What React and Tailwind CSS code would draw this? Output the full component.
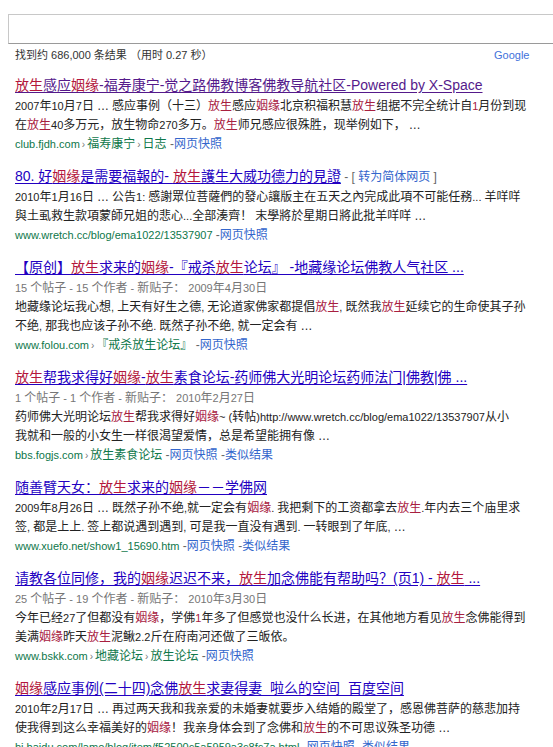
const RED = 'text-[#b3163c]';

// Latin runs sit a little smaller than the CJK text, as in the source page
function Mixed({ text, small = true }) {
  if (!small) return text;
  const runs = text.split(/([\x20-\x7e]+)/);
  return runs.map((t, i) =>
    /^[\x20-\x7e]+$/.test(t) ? (
      <span key={i} className="text-[11px]">{t}</span>
    ) : (
      <span key={i}>{t}</span>
    )
  );
}

// "{...}" marks the highlighted keyword parts
function Marked({ text, red = RED, small = false }) {
  const parts = text.split(/(\{[^}]*\})/);
  return parts.map((p, i) =>
    p.startsWith('{') ? (
      <span key={i} className={red}>
        <Mixed text={p.slice(1, -1)} small={small} />
      </span>
    ) : (
      <span key={i}>
        <Mixed text={p} small={small} />
      </span>
    )
  );
}

const results = [
  {
    title: '{放生}感应{姻缘}-福寿康宁-觉之路佛教博客佛教导航社区-Powered by X-Space',
    visited: true,
    lines: [
      '2007年10月7日 … 感应事例（十三）{放生}感应{姻缘}北京积福积慧{放生}组据不完全统计自{1}月份到现',
      '在{放生}40多万元，放生物命270多万。{放生}师兄感应很殊胜，现举例如下， …',
    ],
    url: 'club.fjdh.com',
    crumbs: ['福寿康宁', '日志'],
    links: ['网页快照'],
  },
  {
    title: '80. 好{姻缘}是需要福報的- {放生}護生大威功德力的見證',
    convert: true,
    lines: [
      '2010年1月16日 … 公告1: 感謝眾位菩薩們的發心讓版主在五天之內完成此項不可能任務... 羊咩咩',
      '與土虱救生款項蒙師兄姐的悲心...全部湊齊！ 末學將於星期日將此批羊咩咩 …',
    ],
    url: 'www.wretch.cc/blog/ema1022/13537907',
    links: ['网页快照'],
  },
  {
    title: '【原创】{放生}求来的{姻缘}-『戒杀{放生}论坛』 -地藏缘论坛佛教人气社区 ...',
    meta: '15 个帖子 - 15 个作者 - 新贴子： 2009年4月30日',
    lines: [
      '地藏缘论坛我心想, 上天有好生之德, 无论道家佛家都提倡{放生}, 既然我{放生}延续它的生命使其子孙',
      '不绝, 那我也应该子孙不绝. 既然子孙不绝, 就一定会有 …',
    ],
    url: 'www.folou.com',
    crumbs: ['『戒杀放生论坛』'],
    links: ['网页快照'],
  },
  {
    title: '{放生}帮我求得好{姻缘}-{放生}素食论坛-药师佛大光明论坛药师法门|佛教|佛 ...',
    meta: '1 个帖子 - 1 个作者 - 新贴子： 2010年2月27日',
    lines: [
      '药师佛大光明论坛{放生}帮我求得好{姻缘}~ (转帖)http://www.wretch.cc/blog/ema1022/13537907从小',
      '我就和一般的小女生一样很渴望爱情，总是希望能拥有像 …',
    ],
    url: 'bbs.fogjs.com',
    crumbs: ['放生素食论坛'],
    links: ['网页快照', '类似结果'],
  },
  {
    title: '随善臂天女：{放生}求来的{姻缘}－－学佛网',
    lines: [
      '2009年8月26日 … 既然子孙不绝,就一定会有{姻缘}. 我把剩下的工资都拿去{放生}.年内去三个庙里求',
      '签, 都是上上. 签上都说遇到遇到, 可是我一直没有遇到. 一转眼到了年底, …',
    ],
    url: 'www.xuefo.net/show1_15690.htm',
    links: ['网页快照', '类似结果'],
  },
  {
    title: '请教各位同修，我的{姻缘}迟迟不来，{放生}加念佛能有帮助吗？(页1) - {放生} ...',
    meta: '25 个帖子 - 19 个作者 - 新贴子： 2010年3月30日',
    lines: [
      '今年已经27了但都没有{姻缘}，学佛{1}年多了但感觉也没什么长进，在其他地方看见{放生}念佛能得到',
      '美满{姻缘}昨天{放生}泥鳅2.2斤在府南河还做了三皈依。',
    ],
    url: 'www.bskk.com',
    crumbs: ['地藏论坛', '放生论坛'],
    links: ['网页快照'],
  },
  {
    title: '{姻缘}感应事例(二十四)念佛{放生}求妻得妻_啦么的空间_百度空间',
    lines: [
      '2010年2月17日 … 再过两天我和我亲爱的未婚妻就要步入结婚的殿堂了，感恩佛菩萨的慈悲加持',
      '使我得到这么幸福美好的{姻缘}！我亲身体会到了念佛和{放生}的不可思议殊圣功德 …',
    ],
    url: 'hi.baidu.com/lamo/blog/item/f52500c5a5959a3c8fc7a.html',
    links: ['网页快照', '类似结果'],
  },
];

function Result({ r }) {
  return (
    <li className="mb-[11px]">
      <div className="h-[23px] leading-[23px] text-[14px] whitespace-nowrap">
        <a
          href="#"
          className={`underline underline-offset-2 ${r.visited ? 'text-[#551a8b]' : 'text-[#2200c1]'}`}
        >
          <Marked text={r.title} />
        </a>
        {r.convert && (
          <span className="text-[12px] text-[#666]">
            {' '}- [ <a href="#" className="text-[#3366cc]">转为简体网页</a> ]
          </span>
        )}
      </div>
      {r.meta && (
        <div className="h-[19px] leading-[19px] text-[12px] text-[#767676] whitespace-nowrap">
          <Mixed text={r.meta} />
        </div>
      )}
      {r.lines.map((l, i) => (
        <div key={i} className="h-[19px] leading-[19px] text-[12px] text-[#222] whitespace-nowrap">
          <Marked text={l} red="text-[#a8203f]" small />
        </div>
      ))}
      <div className="h-[19px] leading-[19px] text-[12px] whitespace-nowrap">
        <span className="text-[#0e774a] text-[11px]">{r.url}</span>
        {r.crumbs &&
          r.crumbs.map((c) => (
            <span key={c} className="text-[#0e774a]">
              <span className="text-[10px] text-[#777] mx-[2px]">›</span>
              {c}
            </span>
          ))}
        {r.links.map((l) => (
          <span key={l} className="text-[#666]">
            {' '}-<a href="#" className="text-[#3366cc]">{l}</a>
          </span>
        ))}
      </div>
    </li>
  );
}

export default function App() {
  return (
    <div
      className="min-h-screen bg-white overflow-hidden"
      style={{ fontFamily: '"Liberation Sans", "Noto Sans CJK SC", sans-serif' }}
    >
      {/* search box, runs past the right edge */}
      <div className="ml-2 -mr-8 mt-[14px] h-[30px] border border-[#c8c8c8] border-b-[#9a9a9a] bg-white" />

      <div className="flex mt-[4px] h-[15px] leading-[15px] text-[11px] text-[#333] whitespace-nowrap">
        <span className="pl-[15px] w-[494px]">找到约 686,000 条结果 （用时 0.27 秒）</span>
        <a href="#" className="text-[#4272db]">Google</a>
      </div>

      <ol className="mt-[11px] pl-[15px]">
        {results.map((r, i) => (
          <Result key={i} r={r} />
        ))}
      </ol>
    </div>
  );
}
